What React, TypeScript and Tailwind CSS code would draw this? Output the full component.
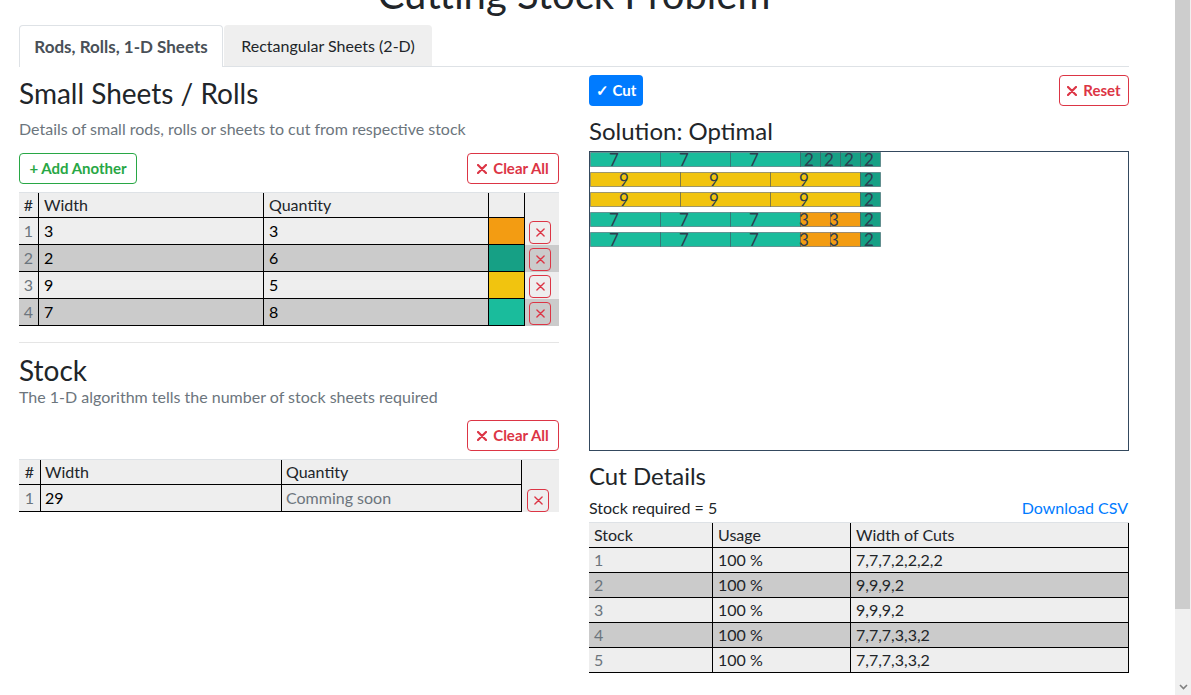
import React from 'react';

const C7 = '#1abc9c';
const C2 = '#16a085';
const C9 = '#f1c40f';
const C3 = '#f39c12';

const PIECES: Record<number, { color: string; off: number }> = {
  7: { color: C7, off: 24 },
  2: { color: C2, off: 9 },
  9: { color: C9, off: 34 },
  3: { color: C3, off: 4 },
};

const BARS = [
  [7, 7, 7, 2, 2, 2, 2],
  [9, 9, 9, 2],
  [9, 9, 9, 2],
  [7, 7, 7, 3, 3, 2],
  [7, 7, 7, 3, 3, 2],
];

function XIcon({ size, stroke }: { size: number; stroke: number }) {
  return (
    <svg width={size} height={size} viewBox="0 0 10 10" className="block">
      <path d="M1 1 L9 9 M9 1 L1 9" stroke="currentColor" strokeWidth={stroke} strokeLinecap="round" fill="none" />
    </svg>
  );
}

function XButton() {
  return (
    <div className="w-[22px] h-[23px] border border-[#dc3545] rounded-[4px] flex items-center justify-center text-[#dc3545]">
      <XIcon size={9} stroke={1.5} />
    </div>
  );
}

function DangerButton({ label, w }: { label: string; w: string }) {
  return (
    <div
      className={`${w} h-[31px] border border-[#dc3545] rounded-[4px] flex items-center justify-center gap-[6px] text-[#dc3545] font-bold text-[15px]`}
    >
      <XIcon size={10} stroke={2.2} />
      <span>{label}</span>
    </div>
  );
}

function Chart() {
  return (
    <svg width="538" height="298" className="block overflow-visible">
      {BARS.map((bar, i) => {
        let x = 0;
        return (
          <g key={i}>
            {bar.map((v, j) => {
              const p = PIECES[v];
              const el = (
                <g key={j}>
                  <rect
                    x={x * 10 + 0.5}
                    y={i * 20 + 0.5}
                    width={v * 10}
                    height={14}
                    fill={p.color}
                    stroke="#2c3e50"
                    strokeOpacity={0.45}
                  />
                  <text
                    x={x * 10 + p.off}
                    y={i * 20 + 13.5}
                    textAnchor="middle"
                    fontSize={17}
                    fill="#2c3e50"
                  >
                    {v}
                  </text>
                </g>
              );
              x += v;
              return el;
            })}
          </g>
        );
      })}
    </svg>
  );
}

const SMALL = [
  { w: '3', q: '3', c: C3 },
  { w: '2', q: '6', c: C2 },
  { w: '9', q: '5', c: C9 },
  { w: '7', q: '8', c: C7 },
];

const CUTS = ['7,7,7,2,2,2,2', '9,9,9,2', '9,9,9,2', '7,7,7,3,3,2', '7,7,7,3,3,2'];

function rowBg(i: number) {
  return i % 2 === 0 ? 'bg-[#eeeeee]' : 'bg-[#cbcbcb]';
}

function Left() {
  return (
    <div className="w-[540px] flex flex-col">
      <h3 className="text-[28px] leading-[34px] mt-[9px] font-normal">Small Sheets / Rolls</h3>
      <p className="text-[16px] leading-[24px] mt-[7px] text-[#6c757d]">
        Details of small rods, rolls or sheets to cut from respective stock
      </p>
      <div className="flex justify-between mt-[12px]">
        <div className="w-[118px] h-[31px] border border-[#28a745] rounded-[4px] flex items-center justify-center text-[#28a745] font-bold text-[15px]">
          + Add Another
        </div>
        <DangerButton label="Clear All" w="w-[92px]" />
      </div>
      <div className="mt-[8px] grid grid-cols-[20px_225px_225px_36px_34px] border-t border-[#dee2e6] text-[16px]">
        <div className="h-[25px] bg-[#eeeeee] border-r border-b border-black flex items-center justify-center">#</div>
        <div className="h-[25px] bg-[#eeeeee] border-r border-b border-black flex items-center pl-[5px]">Width</div>
        <div className="h-[25px] bg-[#eeeeee] border-r border-b border-black flex items-center pl-[5px]">Quantity</div>
        <div className="h-[25px] bg-[#eeeeee] border-r border-b border-black"></div>
        <div className="h-[25px] bg-[#eeeeee]"></div>
        {SMALL.map((r, i) => (
          <React.Fragment key={i}>
            <div className={`h-[27px] ${rowBg(i)} border-r border-b border-black flex items-center justify-center text-[#6c757d]`}>{i + 1}</div>
            <div className={`h-[27px] ${rowBg(i)} border-r border-b border-black flex items-center pl-[5px] text-black`}>{r.w}</div>
            <div className={`h-[27px] ${rowBg(i)} border-r border-b border-black flex items-center pl-[5px] text-black`}>{r.q}</div>
            <div className="h-[27px] border-r border-b border-black" style={{ backgroundColor: r.c }}></div>
            <div className={`h-[27px] ${rowBg(i)} pt-[3px] pl-[4px]`}>
              <XButton />
            </div>
          </React.Fragment>
        ))}
      </div>
      <div className="mt-[16px] h-px bg-[#e5e5e5]"></div>
      <h3 className="text-[28px] leading-[30px] h-[30px] mt-[12px] font-normal">Stock</h3>
      <p className="text-[16px] leading-[24px] text-[#6c757d]">
        The 1-D algorithm tells the number of stock sheets required
      </p>
      <div className="flex justify-end mt-[11px]">
        <DangerButton label="Clear All" w="w-[92px]" />
      </div>
      <div className="mt-[8px] grid grid-cols-[22px_241px_240px_37px] border-t border-[#dee2e6] text-[16px]">
        <div className="h-[25px] bg-[#eeeeee] border-r border-b border-black flex items-center justify-center">#</div>
        <div className="h-[25px] bg-[#eeeeee] border-r border-b border-black flex items-center pl-[4px]">Width</div>
        <div className="h-[25px] bg-[#eeeeee] border-r border-b border-black flex items-center pl-[4px]">Quantity</div>
        <div className="h-[25px] bg-[#eeeeee]"></div>
        <div className="h-[27px] bg-[#eeeeee] border-r border-b border-black flex items-center justify-center text-[#6c757d]">1</div>
        <div className="h-[27px] bg-[#eeeeee] border-r border-b border-black flex items-center pl-[4px] text-black">29</div>
        <div className="h-[27px] bg-[#eeeeee] border-r border-b border-black flex items-center pl-[4px] text-[#6c757d]">Comming soon</div>
        <div className="h-[27px] bg-[#eeeeee] pt-[4px] pl-[5px]">
          <XButton />
        </div>
      </div>
    </div>
  );
}

function Right() {
  return (
    <div className="w-[540px] flex flex-col">
      <div className="flex justify-between mt-[8px]">
        <div className="w-[54px] h-[31px] bg-[#007bff] rounded-[4px] flex items-center justify-center text-white font-bold text-[15px]">
          ✓ Cut
        </div>
        <DangerButton label="Reset" w="w-[70px]" />
      </div>
      <h4 className="text-[24px] leading-[29px] mt-[10px] font-normal">Solution: Optimal</h4>
      <div className="mt-[6px] h-[300px] border border-[#34495e]">
        <Chart />
      </div>
      <h4 className="text-[24px] leading-[29px] mt-[10px] font-normal">Cut Details</h4>
      <div className="flex justify-between items-center mt-[6px] h-[24px] text-[16px]">
        <span>Stock required = 5</span>
        <span className="text-[#007bff] pr-px">Download CSV</span>
      </div>
      <div className="mt-[2px] grid grid-cols-[124px_138px_278px] border-t border-[#dee2e6] text-[16px]">
        <div className="h-[25px] bg-[#eeeeee] border-r border-b border-black flex items-center pl-[5px]">Stock</div>
        <div className="h-[25px] bg-[#eeeeee] border-r border-b border-black flex items-center pl-[5px]">Usage</div>
        <div className="h-[25px] bg-[#eeeeee] border-r border-b border-black flex items-center pl-[5px]">Width of Cuts</div>
        {CUTS.map((c, i) => (
          <React.Fragment key={i}>
            <div className={`h-[25px] ${rowBg(i)} border-r border-b border-black flex items-center pl-[5px] text-[#6c757d]`}>{i + 1}</div>
            <div className={`h-[25px] ${rowBg(i)} border-r border-b border-black flex items-center pl-[5px]`}>100 %</div>
            <div className={`h-[25px] ${rowBg(i)} border-r border-b border-black flex items-center pl-[5px]`}>{c}</div>
          </React.Fragment>
        ))}
      </div>
    </div>
  );
}

function Scrollbar() {
  return (
    <div className="w-[16px] h-full bg-[#f0f0f0] flex flex-col">
      <div className="h-[609px] w-[15px] bg-[#cdcdcd]"></div>
      <div className="flex-1 flex items-end justify-center pb-[5px]">
        <svg width="9" height="6" viewBox="0 0 9 6">
          <path d="M1 1 L4.5 4.5 L8 1" fill="none" stroke="#808080" strokeWidth="1.6" />
        </svg>
      </div>
    </div>
  );
}

export default function App() {
  return (
    <div className="h-screen w-full overflow-hidden flex bg-white text-[#212529] font-['Lato',sans-serif]">
      <div className="flex-1 min-w-0 overflow-hidden">
        <div className="w-[1110px] ml-[19px]">
          <h1 className="text-[40px] leading-[48px] text-center mt-[-30px] mb-[7px] font-normal">Cutting Stock Problem</h1>
          <div className="flex items-start h-[42px] border-b border-[#dee2e6]">
            <div className="w-[204px] h-[42px] border border-b-0 border-[#dee2e6] rounded-t-[4px] bg-white flex items-center justify-center font-bold text-[#495057] text-[17px]">
              Rods, Rolls, 1-D Sheets
            </div>
            <div className="w-[208px] ml-px h-[41px] rounded-t-[4px] bg-[#efefef] flex items-center justify-center text-[16px]">
              Rectangular Sheets (2-D)
            </div>
          </div>
          <div className="flex gap-[30px]">
            <Left />
            <Right />
          </div>
        </div>
      </div>
      <Scrollbar />
    </div>
  );
}
